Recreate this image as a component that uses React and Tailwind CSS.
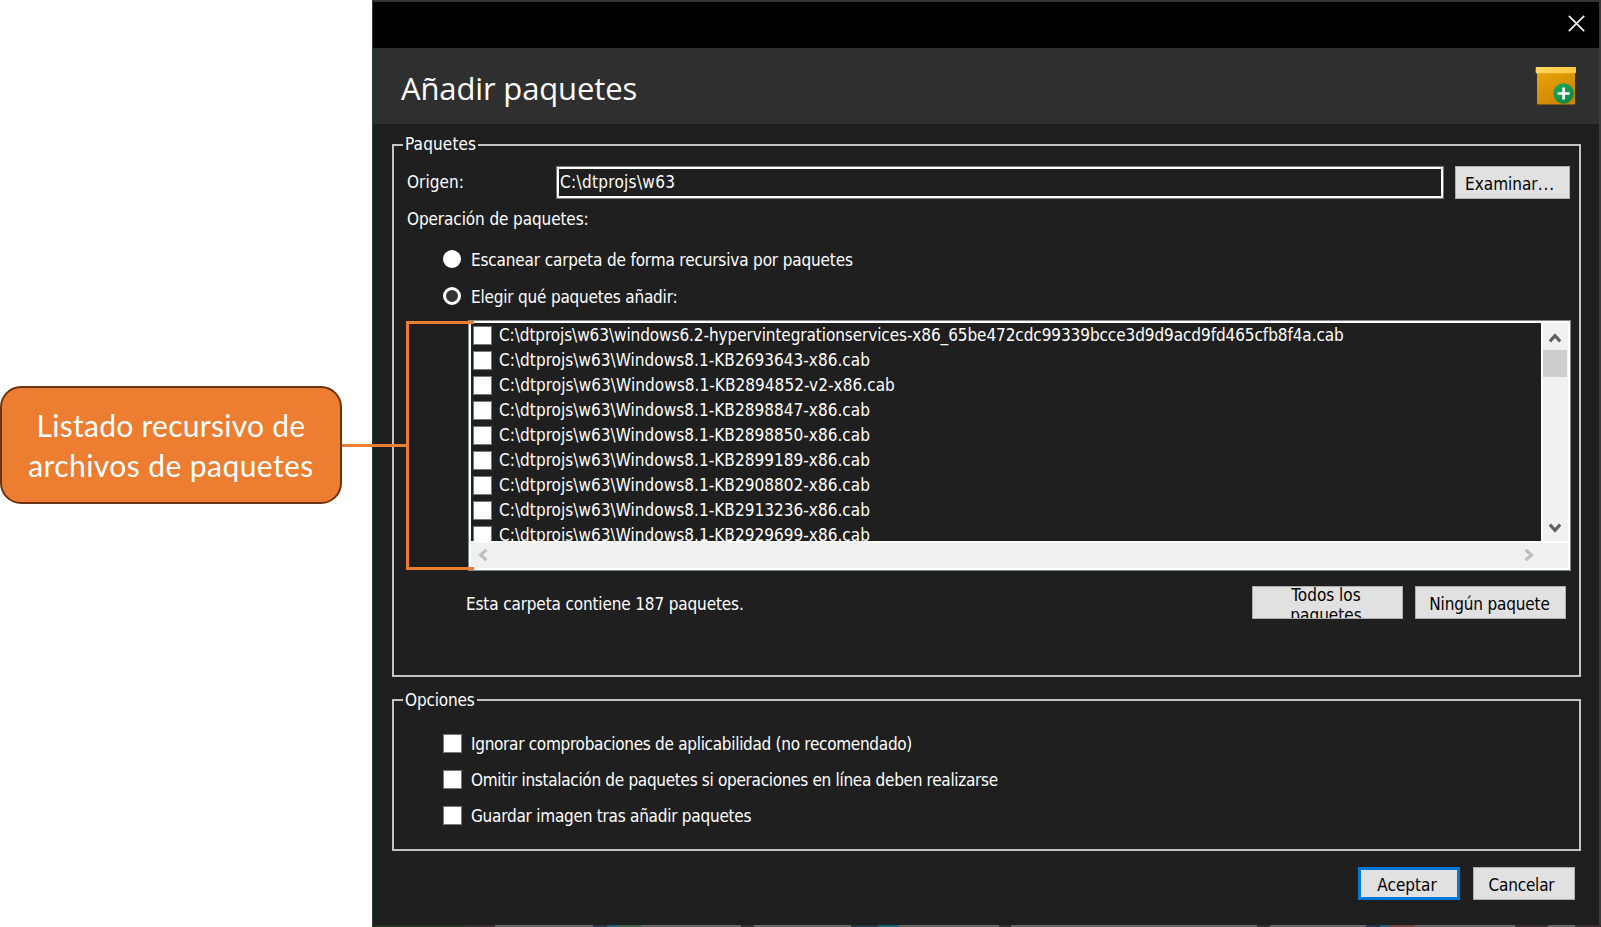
const files = [
  { name: "C:\\dtprojs\\w63\\windows6.2-hypervintegrationservices-x86_65be472cdc99339bcce3d9d9acd9fd465cfb8f4a.cab", tracking: "tracking-[-0.08px]" },
  { name: "C:\\dtprojs\\w63\\Windows8.1-KB2693643-x86.cab", tracking: "tracking-[0.04px]" },
  { name: "C:\\dtprojs\\w63\\Windows8.1-KB2894852-v2-x86.cab", tracking: "tracking-[0.06px]" },
  { name: "C:\\dtprojs\\w63\\Windows8.1-KB2898847-x86.cab", tracking: "tracking-[0.04px]" },
  { name: "C:\\dtprojs\\w63\\Windows8.1-KB2898850-x86.cab", tracking: "tracking-[0.04px]" },
  { name: "C:\\dtprojs\\w63\\Windows8.1-KB2899189-x86.cab", tracking: "tracking-[0.04px]" },
  { name: "C:\\dtprojs\\w63\\Windows8.1-KB2908802-x86.cab", tracking: "tracking-[0.04px]" },
  { name: "C:\\dtprojs\\w63\\Windows8.1-KB2913236-x86.cab", tracking: "tracking-[0.04px]" },
  { name: "C:\\dtprojs\\w63\\Windows8.1-KB2929699-x86.cab", tracking: "tracking-[0.04px]" },
];

const options = [
  { label: "Ignorar comprobaciones de aplicabilidad (no recomendado)", tracking: "tracking-[-0.29px]" },
  { label: "Omitir instalación de paquetes si operaciones en línea deben realizarse", tracking: "tracking-[-0.3px]" },
  { label: "Guardar imagen tras añadir paquetes", tracking: "tracking-[-0.24px]" },
];

/* Slices of the desktop that show under the window's lower edge */
const strip = [
  "w-[94px] bg-[#22331f]",
  "w-[29px] bg-[#352f30]",
  "w-[98px] bg-[#6b6666]",
  "w-[14px] bg-[#203850]",
  "w-[10px] bg-[#1d5c7c]",
  "w-[24px] bg-[#3c6350]",
  "w-[100px] bg-[#6b6666]",
  "w-[13px] bg-[#352f30]",
  "w-[97px] bg-[#6b6666]",
  "w-[27px] bg-[#203850]",
  "w-[21px] bg-[#1d5c7c]",
  "w-[100px] bg-[#6b6666]",
  "w-[12px] bg-[#352f30]",
  "w-[246px] bg-[#6b6666]",
  "w-[13px] bg-[#352f30]",
  "w-[96px] bg-[#6b6666]",
  "w-[14px] bg-[#203850]",
  "w-[10px] bg-[#1d6080]",
  "w-[25px] bg-[#7d4444]",
  "w-[100px] bg-[#6b6666]",
  "w-[33px] bg-[#352f30]",
  "w-[27px] bg-[#6b6666]",
  "flex-1 bg-[#352f30]",
];

function Chevron({ className, d }) {
  return (
    <svg className={className} viewBox="0 0 12 12" fill="none" stroke="currentColor" strokeWidth="3.2">
      <path d={d} />
    </svg>
  );
}

function Button({ className = "", children }) {
  return (
    <button className={`flex h-[33px] shrink-0 items-center justify-center border border-[#adadad] bg-[#e1e1e1] pt-[3px] text-black ${className}`}>
      {children}
    </button>
  );
}

function Group({ title, className, children }) {
  return (
    <fieldset className={`border-2 border-[#c4c4c4] pl-[13px] ${className}`}>
      <legend className="ml-[-4px] px-[2px] leading-[22px]">{title}</legend>
      {children}
    </fieldset>
  );
}

function Box() {
  return <span className="size-[19px] shrink-0 border border-[#777777] bg-white" />;
}

function PackageIcon() {
  return (
    <svg className="h-[40px] w-[42px]" viewBox="0 0 42 40">
      <defs>
        <linearGradient id="box" x1="0" y1="0" x2="0.6" y2="1">
          <stop offset="0" stopColor="#eba706" />
          <stop offset="1" stopColor="#cc8500" />
        </linearGradient>
        <linearGradient id="lid" x1="0" y1="0" x2="1" y2="0">
          <stop offset="0" stopColor="#ffd767" />
          <stop offset="1" stopColor="#ffc83a" />
        </linearGradient>
        <linearGradient id="plus" x1="0" y1="0" x2="1" y2="1">
          <stop offset="0" stopColor="#1cab60" />
          <stop offset="1" stopColor="#0b7f42" />
        </linearGradient>
      </defs>
      <rect x="2" y="3" width="38" height="35.5" rx="1.2" fill="url(#box)" />
      <rect x="0.7" y="1" width="40.3" height="6.3" rx="1" fill="url(#lid)" />
      <circle cx="28.6" cy="27.5" r="10.2" fill="url(#plus)" />
      <path d="M28.6 21.5v12M22.6 27.5h12" stroke="#fff" strokeWidth="2.6" />
    </svg>
  );
}

export default function App() {
  return (
    <div className="relative flex h-[927px] w-[1601px] items-stretch overflow-hidden bg-white font-['DejaVu_Sans_Condensed','DejaVu_Sans',sans-serif] text-[17px] leading-[20px] text-white">
      <aside className="flex w-[372px] shrink-0 flex-col pt-[386px]">
        <div className="flex h-[118px] w-[342px] flex-col items-center rounded-[21px] border-2 border-[#6b3410] bg-[#ed7d31] pt-[17px] text-center font-['Lato',sans-serif] text-[30px] leading-[40px]">
          <span className="tracking-[0.28px]">Listado recursivo de</span>
          <span className="tracking-[0.42px]">archivos de paquetes</span>
        </div>
      </aside>

      <div className="flex flex-1 flex-col">
        <main className="flex h-[925px] flex-col border-t-2 border-r-2 border-l border-t-[#353535] border-r-[#3a3a3a] border-l-[#2b432b] bg-[#1f1f1f]">
          <div className="flex h-[46px] items-center justify-end bg-black pr-[14px] pb-[4px]">
            <svg className="size-[17px]" viewBox="0 0 17 17" stroke="#f0f0f0" strokeWidth="1.7">
              <path d="M0.8 0.8l15.4 15.4M16.2 0.8L0.8 16.2" />
            </svg>
          </div>
          <header className="flex h-[76px] items-center justify-between bg-[#2f2f2f] pr-[22px] pl-[28px]">
            <h1 className="pt-[4px] font-['Open_Sans',sans-serif] text-[31px] leading-[40px] tracking-[-0.14px]">Añadir paquetes</h1>
            <PackageIcon />
          </header>

          <div className="flex flex-1 flex-col pr-[18px] pl-[19px]">
            <Group title={<span className="relative -top-px tracking-[0.15px]">Paquetes</span>} className="mt-[10px] h-[543px]">
              <div className="mt-[10px] flex h-[33px] items-start">
                <span className="w-[149px] pt-[6px] tracking-[0.05px]">Origen:</span>
                <div className="h-[33px] w-[888px] border border-[#777777]">
                  <div className="h-[31px] border-2 border-white pl-px leading-[26px] tracking-[0.3px]">C:\dtprojs\w63</div>
                </div>
                <Button className="ml-[11px] w-[115px] pr-[5px]">
                  <span>Examinar<span className="tracking-[0.9px]">...</span></span>
                </Button>
              </div>
              <div className="mt-[10px] tracking-[-0.1px]">Operación de paquetes:</div>

              <div className="mt-[21px] flex flex-col gap-[17px] pl-[36px]">
                <label className="flex h-[20px] items-start gap-[10px] tracking-[-0.15px]">
                  <span className="size-[18px] shrink-0 rounded-full bg-white" />
                  Escanear carpeta de forma recursiva por paquetes
                </label>
                <label className="flex h-[20px] items-start gap-[10px] tracking-[-0.2px]">
                  <span className="size-[18px] shrink-0 rounded-full border-[3.5px] border-white bg-[#333333]" />
                  Elegir qué paquetes añadir:
                </label>
              </div>

              <div className="mt-[13px] ml-[61px] h-[251px] w-[1103px] border border-[#82878f]">
                <div className="flex h-[249px] flex-col border-2 border-white bg-[#f0f0f0]">
                  <div className="flex h-[218px]">
                    <ul className="h-[218px] w-[1070px] shrink-0 overflow-hidden bg-[#1f1f1f] pt-[3px] pl-[2px]">
                      {files.map((file) => (
                        <li key={file.name} className={`flex h-[25px] items-start gap-[7px] whitespace-nowrap ${file.tracking}`}>
                          <Box />
                          <span className="-mt-px">{file.name}</span>
                        </li>
                      ))}
                    </ul>
                    <div className="flex flex-1 flex-col items-center border-l-2 border-white pr-px text-[#606060]">
                      <Chevron className="mt-[9px] size-[12px]" d="M0.8 9.5L6 3.6L11.2 9.5" />
                      <div className="mt-[6px] h-[27px] w-[24px] bg-[#cdcdcd]" />
                      <Chevron className="mt-auto mb-[7px] size-[12px]" d="M0.8 2.5L6 8.4L11.2 2.5" />
                    </div>
                  </div>
                  <div className="flex flex-1 items-center justify-between border-t-2 border-white pr-[33px] pb-[2px] pl-[6px] text-[#bfbfbf]">
                    <Chevron className="size-[12px]" d="M9.5 0.8L3.6 6L9.5 11.2" />
                    <Chevron className="size-[12px]" d="M2.5 0.8L8.4 6L2.5 11.2" />
                  </div>
                </div>
              </div>

              <div className="mt-[15px] flex items-start pl-[59px]">
                <span className="w-[786px] pt-[8px] tracking-[-0.14px]">Esta carpeta contiene 187 paquetes.</span>
                <button className="h-[33px] w-[151px] overflow-hidden border border-[#adadad] bg-[#e1e1e1] pr-[32px] pl-[29px] text-center text-black">
                  <span className="-mt-[2px] block h-[35px]">Todos los paquetes</span>
                </button>
                <Button className="ml-[12px] w-[151px] pr-[2px] tracking-[-0.16px]">Ningún paquete</Button>
              </div>
            </Group>

            <Group title={<span className="tracking-[-0.15px]">Opciones</span>} className="mt-[12px] h-[162px]">
              <div className="mt-[23px] flex flex-col gap-[16px] pl-[36px]">
                {options.map((option) => (
                  <label key={option.label} className={`flex h-[20px] items-start gap-[9px] ${option.tracking}`}>
                    <Box />
                    <span>{option.label}</span>
                  </label>
                ))}
              </div>
            </Group>

            <div className="mt-[16px] flex justify-end gap-[13px] pr-[6px]">
              <button className="flex h-[33px] w-[102px] items-center justify-center border-[3px] border-[#0078d7] bg-[#e1e1e1] pt-[3px] pr-[4px] text-black">Aceptar</button>
              <Button className="w-[102px] pr-[5px] tracking-[-0.2px]">Cancelar</Button>
            </div>
          </div>
        </main>
        <div className="flex h-[2px]">
          {strip.map((piece, i) => (
            <span key={i} className={`h-[2px] ${piece}`} />
          ))}
        </div>
      </div>

      <div className="absolute top-[444px] left-[342px] h-[3px] w-[64px] bg-[#ed7d31]" />
      <div className="absolute top-[321px] left-[406px] h-[249px] w-[68px] border-y-[3px] border-l-[3px] border-[#ed7d31]" />
    </div>
  );
}
